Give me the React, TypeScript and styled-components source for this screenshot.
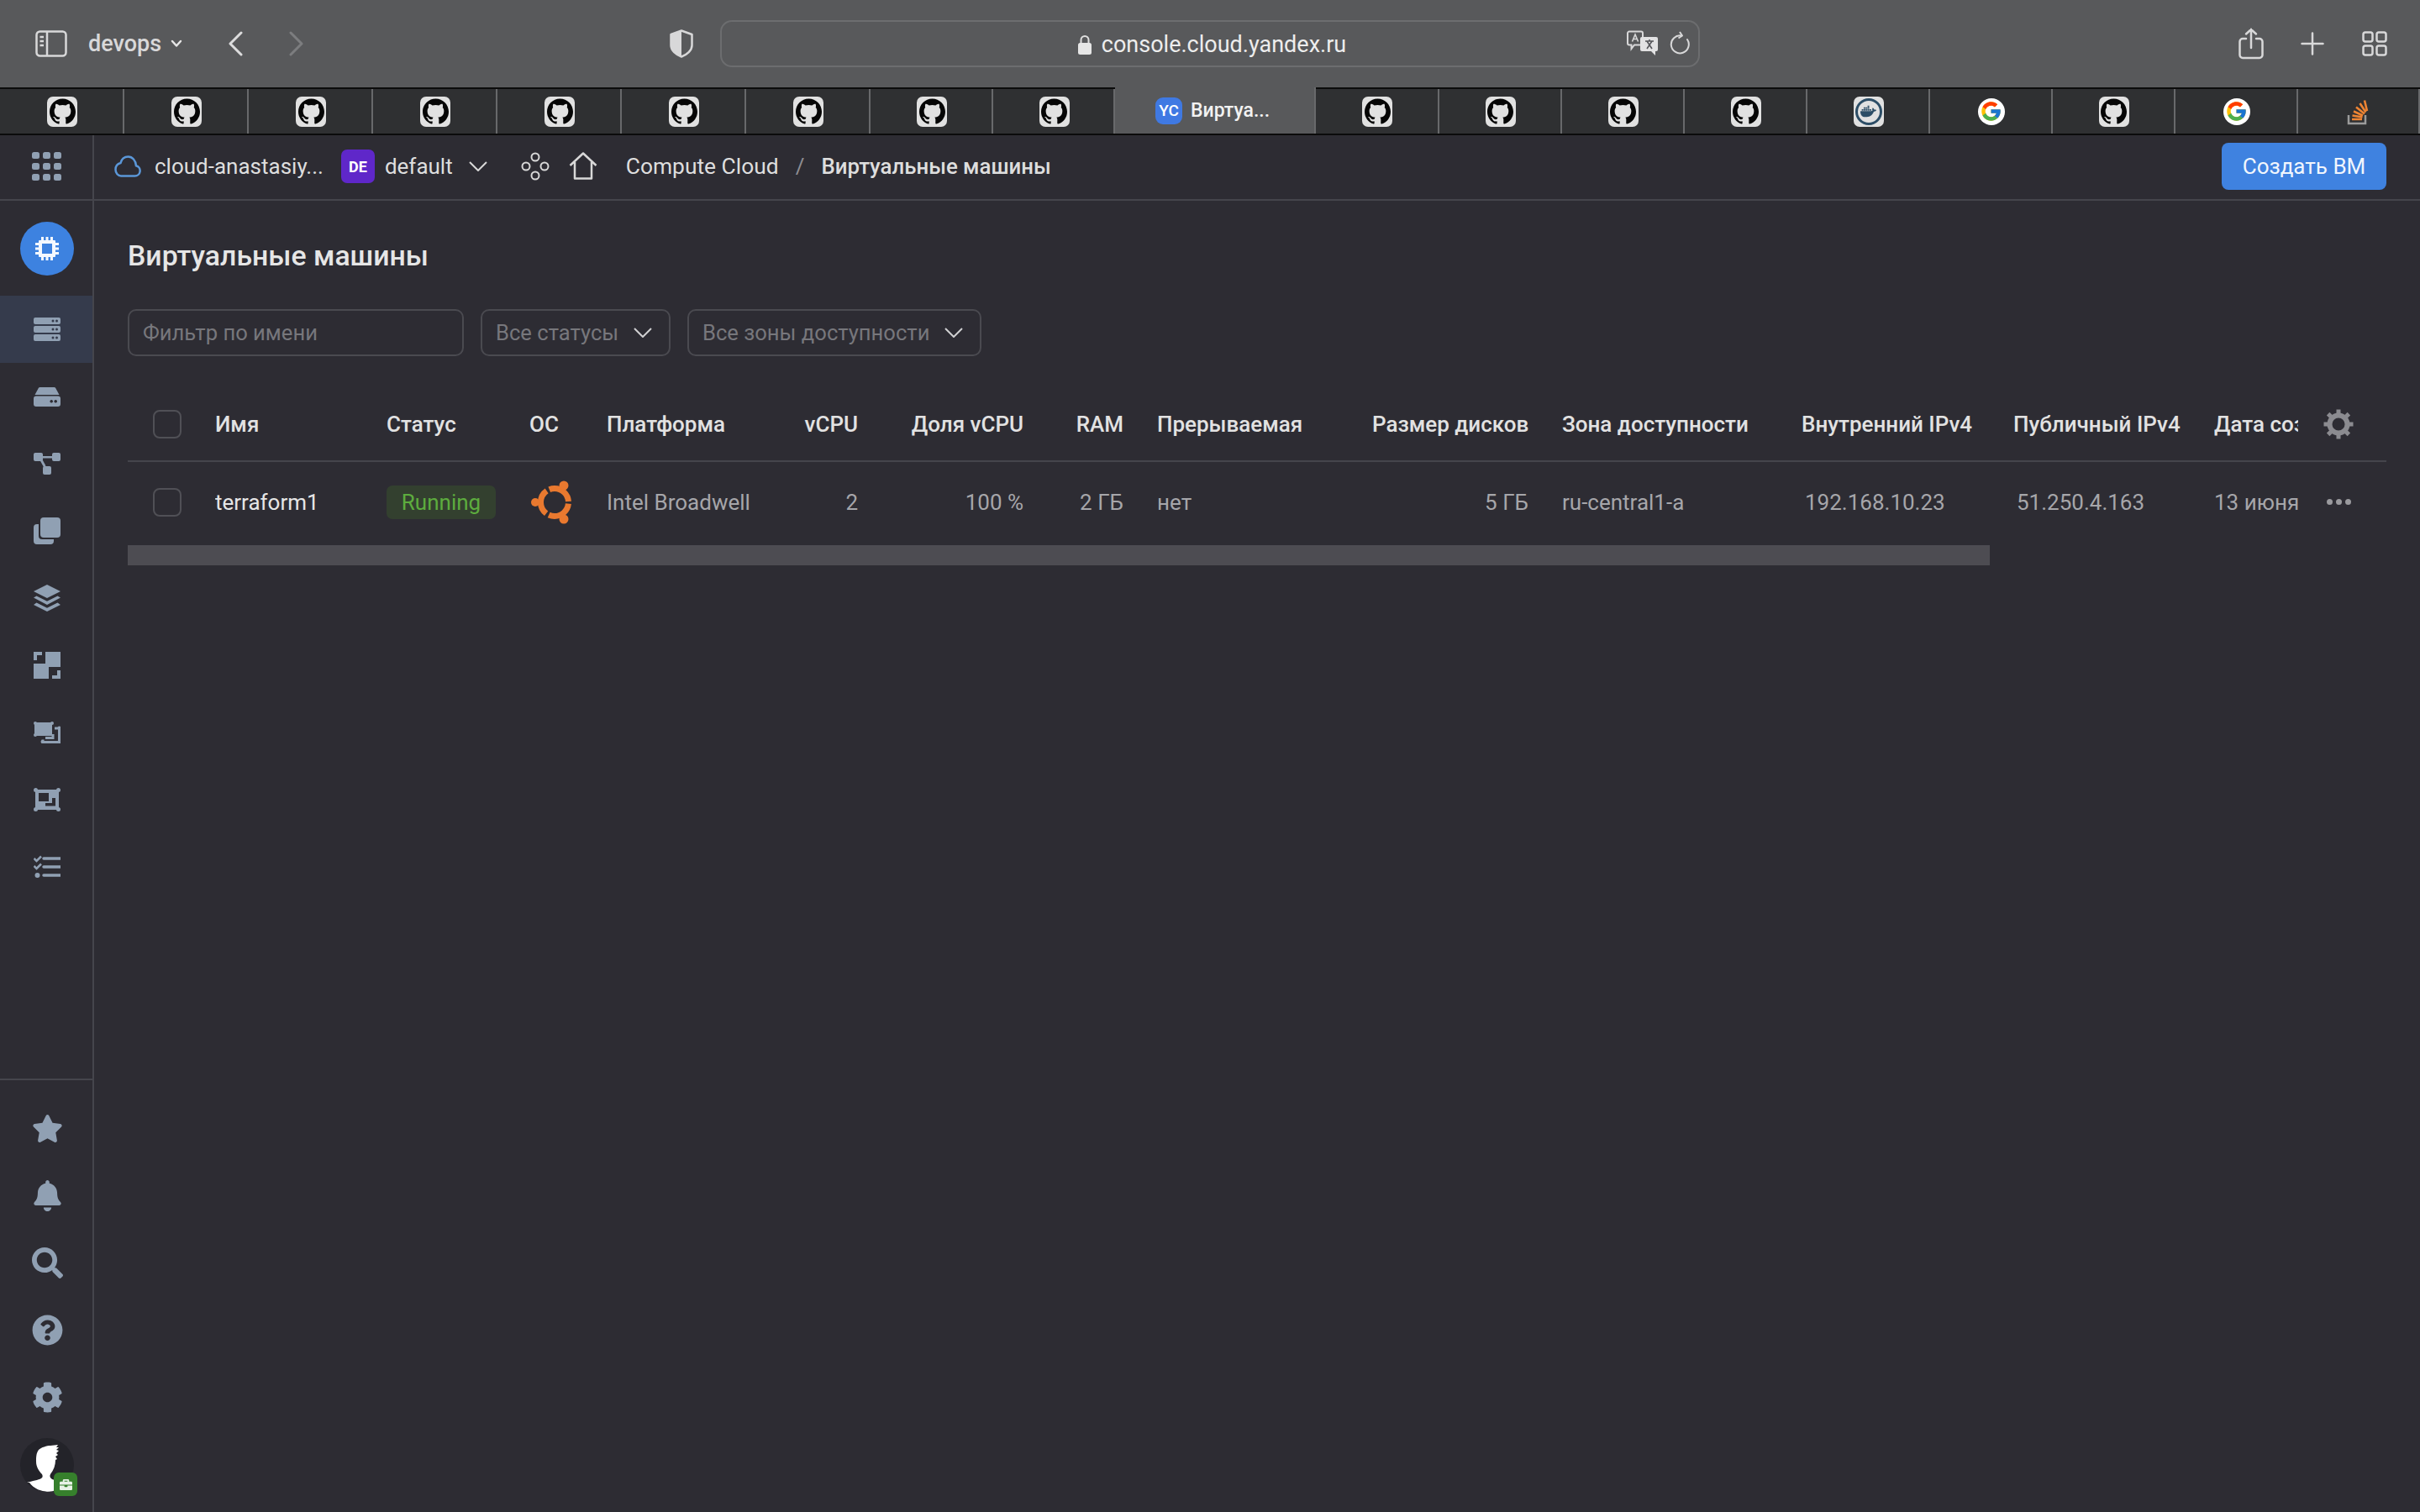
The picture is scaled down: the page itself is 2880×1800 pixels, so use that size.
import React from 'react'
import styled, { createGlobalStyle, css } from 'styled-components'
import { FaStar, FaBell, FaSearch, FaQuestionCircle, FaCog, FaBriefcase } from 'react-icons/fa'
import { FcGoogle } from 'react-icons/fc'
import { SiGithub, SiDocker } from 'react-icons/si'

const GlobalStyle = createGlobalStyle`
    html, body {
        margin: 0;
        padding: 0;
        background: #2d2c33;
    }
    * {
        box-sizing: border-box;
    }
`

const Page = styled.div`
    width: 2880px;
    height: 1800px;
    display: flex;
    flex-direction: column;
    overflow: hidden;
    font-family: Roboto, "Noto Sans", sans-serif;
    font-size: 26px;
    color: #dedede;
    background: #2d2c33;
`

/* browser chrome */
const Toolbar = styled.div`
    height: 104px;
    flex: none;
    display: grid;
    grid-template-columns: 857px 1166px 1fr;
    align-items: center;
    background: #58595b;
    color: #d8d8d9;
`

const ToolGroup = styled.div`
    height: 100%;
    display: flex;
    align-items: center;
`

const ToolIcon = styled.svg<{ $ml: number }>`
    flex: none;
    margin-left: ${p => p.$ml}px;
`

const GroupName = styled.span`
    margin-left: 25px;
    font-weight: 500;
    font-size: 27px;
    color: #d8d8d9;
`

const AddressBar = styled.div`
    height: 56px;
    display: flex;
    align-items: center;
    justify-content: center;
    position: relative;
    padding: 2px 0 0 5px;
    border: 2px solid #6c6d6f;
    border-radius: 14px;
`

const Url = styled.span`
    margin-left: 12px;
    font-size: 27px;
    color: #ededed;
`

const AddressActions = styled.div`
    position: absolute;
    right: 10px;
    top: 10px;
    display: flex;
    align-items: center;
    gap: 13px;
`

const TabBar = styled.div`
    height: 57px;
    flex: none;
    display: flex;
    background: #2f3032;
    border-top: 2px solid #0b0b0b;
    border-bottom: 2px solid #0b0b0b;
`

const Tab = styled.div<{ $wide?: boolean; $w: number }>`
    width: ${p => p.$w}px;
    flex: none;
    display: flex;
    align-items: center;
    justify-content: center;
    padding-left: 2px;
    border-right: 2px solid #68696b;
    ${p => p.$wide && css`
        background: #58595b;
        margin-top: -2px;
        justify-content: flex-start;
        padding-left: 48px;
        gap: 10px;
    `}
`

const TabTitle = styled.span`
    font-size: 23px;
    font-weight: 500;
    color: #f2f2f2;
`

const FavSquare = styled.div`
    width: 36px;
    height: 36px;
    display: flex;
    align-items: center;
    justify-content: center;
    border-radius: 7px;
    background: #e1e1e1;
    color: #060606;
`

const FavCircle = styled.div`
    width: 32px;
    height: 32px;
    display: flex;
    align-items: center;
    justify-content: center;
    border-radius: 50%;
    background: #fff;
`

const DockerRing = styled.div`
    width: 32px;
    height: 32px;
    display: flex;
    align-items: center;
    justify-content: center;
    border-radius: 50%;
    border: 3px solid #2c4d66;
    color: #2c4d66;
`

const YcFav = styled.div`
    width: 32px;
    height: 32px;
    display: flex;
    align-items: center;
    justify-content: center;
    border-radius: 9px;
    background: #3f79e3;
    color: #fff;
    font-size: 19px;
    font-weight: 500;
`

/* console */
const Body = styled.div`
    flex: 1;
    display: flex;
    min-height: 0;
`

const Sidebar = styled.aside`
    width: 112px;
    flex: none;
    display: flex;
    flex-direction: column;
    border-right: 2px solid #45454c;
`

const AppsCell = styled.div`
    height: 78px;
    flex: none;
    display: flex;
    align-items: center;
    justify-content: center;
    padding: 0 0 2px 2px;
    border-bottom: 2px solid #45454c;
`

const LogoCell = styled.div`
    height: 113px;
    flex: none;
    display: flex;
    align-items: center;
    justify-content: center;
    padding-left: 2px;
`

const LogoCircle = styled.div`
    width: 64px;
    height: 64px;
    display: flex;
    align-items: center;
    justify-content: center;
    border-radius: 50%;
    background: #3d82e0;
`

const NavItem = styled.div<{ $active?: boolean }>`
    height: 80px;
    flex: none;
    display: flex;
    align-items: center;
    justify-content: center;
    padding-left: 2px;
    color: #90a0b3;
    background: ${p => (p.$active ? '#353b4c' : 'transparent')};
`

const SideBottom = styled.div`
    margin-top: auto;
    display: flex;
    flex-direction: column;
    padding: 17px 0 24px;
    border-top: 2px solid #45454c;
`

const BottomItem = styled(NavItem)`
    font-size: 37px;
`

const AvatarWrap = styled.div`
    width: 64px;
    height: 64px;
    margin: 9px 0 0 24px;
    position: relative;
`

const AvatarSvg = styled.svg`
    display: block;
    border-radius: 50%;
    background: #232329;
`

const AvatarBadge = styled.div`
    position: absolute;
    left: 40px;
    top: 41px;
    width: 28px;
    height: 28px;
    display: flex;
    align-items: center;
    justify-content: center;
    border-radius: 6px;
    background: #36802c;
    color: #e8f2e6;
    font-size: 15px;
`

const Main = styled.div`
    flex: 1;
    min-width: 0;
    display: flex;
    flex-direction: column;
`

const Header = styled.header`
    height: 78px;
    flex: none;
    display: flex;
    align-items: center;
    padding: 0 40px 2px 24px;
    border-bottom: 2px solid #45454c;
`

const Crumb = styled.span<{ $strong?: boolean }>`
    font-weight: ${p => (p.$strong ? 500 : 400)};
    font-size: ${p => (p.$strong ? '25.800px' : '26px')};
    color: #dedede;
    white-space: nowrap;
`

const CloudName = styled(Crumb)`
    margin-left: 16px;
`

const FolderBadge = styled.div`
    width: 40px;
    height: 40px;
    margin-left: 21px;
    display: flex;
    align-items: center;
    justify-content: center;
    border-radius: 7px;
    background: #5f27c9;
    color: #fff;
    font-size: 18px;
    font-weight: 700;
`

const FolderName = styled(Crumb)`
    margin-left: 12px;
`

const HeadIcon = styled.svg<{ $ml: number }>`
    flex: none;
    margin-left: ${p => p.$ml}px;
    color: #d8d8d8;
`

const ServiceLink = styled(Crumb)`
    margin-left: 34px;
    font-size: 26.400px;
`

const Slash = styled.span`
    margin: 0 20px;
    color: #8d8d92;
`

const CreateButton = styled.button`
    margin-left: auto;
    width: 196px;
    height: 56px;
    border: 0;
    border-radius: 8px;
    background: #3f82e0;
    color: #f1f6fd;
    font: inherit;
`

const Content = styled.main`
    flex: 1;
    padding: 46px 40px 0 40px;
`

const Title = styled.h1`
    margin: 0;
    font-size: 33.800px;
    line-height: 40px;
    font-weight: 500;
    color: #e6e6e6;
`

const Filters = styled.div`
    margin-top: 43px;
    display: flex;
    gap: 20px;
`

const FilterBox = styled.div<{ $w: number }>`
    width: ${p => p.$w}px;
    height: 56px;
    display: flex;
    align-items: center;
    justify-content: space-between;
    padding: 0 20px 0 16px;
    border: 2px solid #4a4a50;
    border-radius: 10px;
    font-size: 25.600px;
    color: #77777c;
`

const tableColumns = css`
    display: grid;
    grid-template-columns: 34px 164px 130px 52px 173px 86px 157px 79px 216px 186px 245px 212px 199px 100px 16px;
    column-gap: 40px;
    align-items: center;
    padding-left: 30px;
`

const TableHead = styled.div`
    ${tableColumns}
    height: 88px;
    margin-top: 38px;
    border-bottom: 2px solid #45454c;
    font-weight: 500;
    color: #e2e2e2;
`

const TableRow = styled.div`
    ${tableColumns}
    height: 99px;
    padding-bottom: 4px;
    color: #a6a6aa;
`

const Cell = styled.div<{ $right?: boolean }>`
    overflow: hidden;
    white-space: nowrap;
    text-align: ${p => (p.$right ? 'right' : 'left')};
`

const NameCell = styled(Cell)`
    color: #e6e6e6;
`

const IpCell = styled(Cell)`
    padding-left: 4px;
`

const Checkbox = styled.div`
    width: 34px;
    height: 34px;
    border: 2px solid #505056;
    border-radius: 8px;
`

const StatusPill = styled.div`
    width: 130px;
    height: 40px;
    display: flex;
    align-items: center;
    justify-content: center;
    border-radius: 7px;
    background: #33402f;
    color: #5dac3e;
`

const GearSvg = styled.svg`
    justify-self: center;
    color: #8b8b90;
`

const RowDots = styled.div`
    justify-self: center;
    display: flex;
    gap: 4px;
`

const RowDot = styled.i`
    width: 7px;
    height: 7px;
    flex: none;
    border-radius: 50%;
    background: #9a9a9e;
`

const ScrollTrack = styled.div`
    width: 2216px;
    height: 24px;
    background: #4d4c52;
`

const BackForward = ({ dir, ml, dim }: { dir: 'l' | 'r'; ml: number; dim?: boolean }) => (
    <ToolIcon $ml={ml} width="18" height="30" viewBox="0 0 18 30" fill="none" stroke={dim ? '#7c7d7f' : '#dcdcdd'} strokeWidth="3" strokeLinecap="round" strokeLinejoin="round">
        <path d={dir === 'l' ? 'M16 2 3 15l13 13' : 'M2 2l13 13L2 28'} />
    </ToolIcon>
)

const GithubFav = () => (
    <FavSquare><SiGithub size={31} /></FavSquare>
)

const GoogleFav = () => (
    <FavCircle><FcGoogle size={27} /></FavCircle>
)

const DockerFav = () => (
    <FavSquare><DockerRing><SiDocker size={19} /></DockerRing></FavSquare>
)

const StackFav = () => (
    <svg width="28" height="32" viewBox="0 0 28 32" fill="none">
        <path d="M2 20v10h20V20" stroke="#9b9b9b" strokeWidth="2.500" />
        <path d="M6 25h12M6.500 20.500l12 2M8 15.500l11 5M11 10.500l10 8M15.500 6l7 10.500M21 2.500l3 12.500" stroke="#ee8433" strokeWidth="2.600" />
    </svg>
)

const ChipIcon = () => (
    <svg width="28" height="28" viewBox="0 0 28 28" fill="#f4f8fe">
        <path fillRule="evenodd" d="M5 4h18a1 1 0 0 1 1 1v18a1 1 0 0 1-1 1H5a1 1 0 0 1-1-1V5a1 1 0 0 1 1-1Zm3 4v12h12V8H8Z" />
        <path d="M7 0h3v5H7zM12.500 0h3v5h-3zM18 0h3v5h-3zM7 23h3v5H7zM12.500 23h3v5h-3zM18 23h3v5h-3zM0 7h5v3H0zM0 12.500h5v3H0zM0 18h5v3H0zM23 7h5v3h-5zM23 12.500h5v3h-5zM23 18h5v3h-5z" />
    </svg>
)

const ServersIcon = () => (
    <svg width="32" height="28" viewBox="0 0 32 28">
        <rect y="0" width="32" height="8" rx="2" fill="currentColor" />
        <rect y="10" width="32" height="8" rx="2" fill="currentColor" />
        <rect y="20" width="32" height="8" rx="2" fill="currentColor" />
        {[4, 14, 24].map(y => (
            <g key={y} fill="#353b4c">
                <circle cx="23" cy={y} r="1.500" />
                <circle cx="27.500" cy={y} r="1.500" />
            </g>
        ))}
    </svg>
)

const DiskIcon = () => (
    <svg width="32" height="23" viewBox="0 0 32 23" fill="currentColor">
        <path d="M7.500 0h17a2 2 0 0 1 1.700 1L30.500 9h-29L5.800 1a2 2 0 0 1 1.700-1Z" />
        <path fillRule="evenodd" d="M3 10.500h26a3 3 0 0 1 3 3V20a3 3 0 0 1-3 3H3a3 3 0 0 1-3-3v-6.500a3 3 0 0 1 3-3Zm20 6.300a1.800 1.800 0 1 0 0 .01Zm5 0a1.800 1.800 0 1 0 0 .01Z" />
    </svg>
)

const NetworkIcon = () => (
    <svg width="32" height="26" viewBox="0 0 32 26" fill="currentColor">
        <rect x="0" y="0" width="11" height="10" rx="2" />
        <rect x="22" y="0" width="10" height="10" rx="2" />
        <rect x="11" y="16" width="10" height="10" rx="2" />
        <path d="M10 4h13v2.500H10zM7 8l2.500-1.500 5 9-2.500 1.500z" />
    </svg>
)

const CopiesIcon = () => (
    <svg width="32" height="32" viewBox="0 0 32 32" fill="currentColor">
        <rect x="8" y="0" width="24" height="24" rx="4" />
        <path d="M6 8v14a4 4 0 0 0 4 4h14v2a4 4 0 0 1-4 4H4a4 4 0 0 1-4-4V12a4 4 0 0 1 4-4h2Z" />
    </svg>
)

const LayersIcon = () => (
    <svg width="32" height="32" viewBox="0 0 32 32" fill="currentColor">
        <path d="M16 0l16 8-16 8L0 8z" />
        <path d="M3.500 13.500 16 19.800l12.500-6.300 3.500 2L16 24 0 15.500z" />
        <path d="M3.500 21.500 16 27.800l12.500-6.300 3.500 2.500L16 32 0 24z" />
    </svg>
)

const ImagesIcon = () => (
    <svg width="32" height="32" viewBox="0 0 32 32" fill="currentColor">
        <path d="M0 0h10v4H4v6H0zM14 0h18v18H14zM0 14h18v18H0zM28 22h4v10H22v-4h6z" />
    </svg>
)

const SnapshotIcon = () => (
    <svg width="32" height="26" viewBox="0 0 32 26" fill="currentColor">
        <rect x="1" y="1" width="21" height="16" />
        {[[2, 2], [22, 2], [2, 16]].map(([cx, cy]) => (
            <circle key={`${cx}-${cy}`} cx={cx} cy={cy} r="2" />
        ))}
        <path d="M25 8h5.500v16.500H11v-3" fill="none" stroke="currentColor" strokeWidth="3" />
        <path d="M14 19.500h9V15" fill="none" stroke="currentColor" strokeWidth="3" />
        {[[30.500, 7.500], [30.500, 24], [10.500, 24]].map(([cx, cy]) => (
            <circle key={`${cx}-${cy}`} cx={cx} cy={cy} r="2" />
        ))}
    </svg>
)

const GroupIcon = () => (
    <svg width="32" height="28" viewBox="0 0 32 28" fill="currentColor">
        <rect x="2" y="2" width="28" height="24" />
        {[[2.500, 2.500], [29.500, 2.500], [2.500, 25.500], [29.500, 25.500]].map(([cx, cy]) => (
            <circle key={`${cx}-${cy}`} cx={cx} cy={cy} r="2.500" />
        ))}
        <path d="M6 6h12v10H6zM22 12h4v9.500H14v-3.500h8z" fill="#2d2c33" />
    </svg>
)

const ChecklistIcon = () => (
    <svg width="32" height="28" viewBox="0 0 32 28" fill="none" stroke="currentColor" strokeWidth="3.500">
        <path d="M12 4h20M12 14h20M12 24h20" strokeLinecap="round" />
        <path d="M0.500 4l3 3L9 1.500M0.500 13l3 3L9 10.500" strokeWidth="2.500" />
        <circle cx="4.500" cy="24" r="3" fill="currentColor" stroke="none" />
    </svg>
)

const AvatarFigure = () => (
    <AvatarSvg width="64" height="64" viewBox="0 0 64 64" fill="#fff">
        <path d="M8 53c6-2 14-3 17-5 2-1 2-3 1-5-4-4-7-9-7-15 0-5 0-10 3-14 3-3 10-5 14-5l9-1-2 3 3 0-3 3 3 1-3 3 2 2-3 2 2 3-2 1c0 6-2 12-6 17-1 2-1 4 2 6l9 3v11c-3 .8-9 1-12 1-10 0-19-4-24-11Z" />
    </AvatarSvg>
)

const UbuntuLogo = () => (
    <svg width="54" height="52" viewBox="-2 0 54 52" fill="none">
        <circle cx="28" cy="26" r="16.500" stroke="#e9792f" strokeWidth="7" strokeDasharray="31 3.560" strokeDashoffset="-1.780" />
        <circle cx="39" cy="6" r="5.500" fill="#e9792f" />
        <circle cx="39" cy="46" r="5.500" fill="#e9792f" />
        <circle cx="5" cy="26" r="5" fill="#e9792f" />
    </svg>
)

const ColumnGear = () => (
    <GearSvg width="36" height="36" viewBox="0 0 36 36" fill="none">
        <circle cx="18" cy="18" r="10.500" stroke="currentColor" strokeWidth="6" />
        {[0, 45, 90, 135, 180, 225, 270, 315].map(a => (
            <rect key={a} x="15.500" y="0.500" width="5" height="7" fill="currentColor" transform={`rotate(${a} 18 18)`} />
        ))}
    </GearSvg>
)

const tabs: { w: number; node: React.ReactNode }[] = [
    ...Array.from({ length: 7 }, () => ({ w: 148, node: <GithubFav /> })),
    { w: 146, node: <GithubFav /> },
    { w: 145, node: <GithubFav /> },
    { w: 239, node: <><YcFav>YC</YcFav><TabTitle>Виртуа...</TabTitle></> },
    { w: 146.5, node: <GithubFav /> },
    { w: 146, node: <GithubFav /> },
    { w: 146, node: <GithubFav /> },
    { w: 146, node: <GithubFav /> },
    { w: 146, node: <DockerFav /> },
    { w: 146, node: <GoogleFav /> },
    { w: 146, node: <GithubFav /> },
    { w: 146, node: <GoogleFav /> },
    { w: 145.5, node: <StackFav /> },
]

const navIcons = [ServersIcon, DiskIcon, NetworkIcon, CopiesIcon, LayersIcon, ImagesIcon, SnapshotIcon, GroupIcon, ChecklistIcon]

const App: React.FC = () => {
    return (
        <Page>
            <GlobalStyle />
            <Toolbar>
                <ToolGroup>
                    <ToolIcon $ml={42} width="38" height="32" viewBox="0 0 38 32" fill="none" stroke="#d8d8d9" strokeWidth="2.500">
                        <rect x="1.500" y="1.500" width="35" height="29" rx="4" />
                        <path d="M14 2v28M5.500 8H10M5.500 13H10M5.500 18H10" />
                    </ToolIcon>
                    <GroupName>devops</GroupName>
                    <ToolIcon $ml={11} width="14" height="10" viewBox="0 0 14 10" fill="none" stroke="#e6e6e6" strokeWidth="2.500" strokeLinecap="round" strokeLinejoin="round">
                        <path d="M2 2l5 5.500L12 2" />
                    </ToolIcon>
                    <BackForward dir="l" ml={54} />
                    <BackForward dir="r" ml={55} dim />
                    <ToolIcon $ml={435} width="28" height="34" viewBox="0 0 28 34" fill="none">
                        <path d="M14 1.500 26.500 6v13c0 6-6 11-12.500 13.500C7.500 30 1.500 25 1.500 19V6Z" stroke="#d8d8d9" strokeWidth="2.500" strokeLinejoin="round" />
                        <path d="M14 1.500V32.500C7.500 30 1.500 25 1.500 19V6Z" fill="#d8d8d9" />
                    </ToolIcon>
                </ToolGroup>
                <AddressBar>
                    <svg width="16" height="24" viewBox="0 0 16 24" fill="none">
                        <path d="M3.500 11V6.500a4.500 4.500 0 0 1 9 0V11" stroke="#dedede" strokeWidth="2" />
                        <rect y="10" width="16" height="14" rx="2.500" fill="#e6e6e6" />
                    </svg>
                    <Url>console.cloud.yandex.ru</Url>
                    <AddressActions>
                        <svg width="38" height="30" viewBox="0 0 38 30" fill="none">
                            <path d="M3 1.500h14a2 2 0 0 1 2 2v12a2 2 0 0 1-2 2H9L5.500 22v-4.500H3a2 2 0 0 1-2-2v-12a2 2 0 0 1 2-2Z" stroke="#d8d8d9" strokeWidth="2" />
                            <path d="M6.500 13.500 10 5l3.500 8.500M8 10.500h4" stroke="#d8d8d9" strokeWidth="1.600" />
                            <path d="M18 8h17a2 2 0 0 1 2 2v13a2 2 0 0 1-2 2h-1v5l-5-5H18a2 2 0 0 1-2-2V10a2 2 0 0 1 2-2Z" fill="#e2e2e3" />
                            <path d="M22 13h10M27 11v2M24 22l6-9M24 13l6 9" stroke="#55565a" strokeWidth="1.600" />
                        </svg>
                        <svg width="24" height="28" viewBox="0 0 24 28" fill="none" stroke="#d8d8d9" strokeWidth="2">
                            <path d="M14 5.500A10.500 10.500 0 1 0 21 10" strokeLinecap="round" />
                            <path d="M12 1l3 4.500-4.500 3" strokeLinejoin="round" />
                        </svg>
                    </AddressActions>
                </AddressBar>
                <ToolGroup>
                    <ToolIcon $ml={641} width="30" height="38" viewBox="0 0 30 38" fill="none" stroke="#d8d8d9" strokeWidth="2.500" strokeLinecap="round">
                        <path d="M9 13H5a3.500 3.500 0 0 0-3.500 3.500v16A3.500 3.500 0 0 0 5 36h20a3.500 3.500 0 0 0 3.500-3.500v-16A3.500 3.500 0 0 0 25 13h-4M15 24V2M9 7.500 15 2l6 5.500" />
                    </ToolIcon>
                    <ToolIcon $ml={44} width="28" height="28" viewBox="0 0 28 28" fill="none" stroke="#d8d8d9" strokeWidth="2.500" strokeLinecap="round">
                        <path d="M14 1.500v25M1.500 14h25" />
                    </ToolIcon>
                    <ToolIcon $ml={45} width="30" height="30" viewBox="0 0 30 30" fill="none" stroke="#d8d8d9" strokeWidth="2.500">
                        <rect x="1.500" y="1.500" width="11" height="11" rx="2.500" />
                        <rect x="17.500" y="1.500" width="11" height="11" rx="2.500" />
                        <rect x="1.500" y="17.500" width="11" height="11" rx="2.500" />
                        <rect x="17.500" y="17.500" width="11" height="11" rx="2.500" />
                    </ToolIcon>
                </ToolGroup>
            </Toolbar>

            <TabBar>
                {tabs.map((t, i) => (
                    <Tab key={i} $w={t.w} $wide={i === 9}>{t.node}</Tab>
                ))}
            </TabBar>

            <Body>
                <Sidebar>
                    <AppsCell>
                        <svg width="36" height="34" viewBox="0 0 36 34" fill="#90a0b3">
                            {[0, 13, 26].map(y => [0, 13, 26].map(x => (
                                <rect key={`${x}-${y}`} x={x} y={y} width="9" height="8" rx="2.500" />
                            )))}
                        </svg>
                    </AppsCell>
                    <LogoCell>
                        <LogoCircle><ChipIcon /></LogoCircle>
                    </LogoCell>
                    {navIcons.map((Icon, i) => (
                        <NavItem key={i} $active={i === 0}><Icon /></NavItem>
                    ))}
                    <SideBottom>
                        <BottomItem><FaStar /></BottomItem>
                        <BottomItem><FaBell /></BottomItem>
                        <BottomItem><FaSearch /></BottomItem>
                        <BottomItem><FaQuestionCircle /></BottomItem>
                        <BottomItem><FaCog /></BottomItem>
                        <AvatarWrap>
                            <AvatarFigure />
                            <AvatarBadge><FaBriefcase /></AvatarBadge>
                        </AvatarWrap>
                    </SideBottom>
                </Sidebar>

                <Main>
                    <Header>
                        <svg width="32" height="26" viewBox="0 0 32 26" fill="none" stroke="#5b97d8" strokeWidth="2.500">
                            <path d="M8 24.500h16.500a6.200 6.200 0 0 0 1.500-12.200C25.500 6 21.500 1.500 16.500 1.500c-4.500 0-8 3-9 7.500C3.500 10 1.500 13.500 1.500 17c0 4 3 7.500 6.500 7.500Z" />
                        </svg>
                        <CloudName>cloud-anastasiy...</CloudName>
                        <FolderBadge>DE</FolderBadge>
                        <FolderName>default</FolderName>
                        <HeadIcon $ml={19} width="22" height="12" viewBox="0 0 22 12" fill="none" stroke="currentColor" strokeWidth="2">
                            <path d="M1 1l10 10L21 1" />
                        </HeadIcon>
                        <HeadIcon $ml={40} width="34" height="34" viewBox="0 0 34 34" fill="none" stroke="currentColor" strokeWidth="2">
                            <circle cx="17" cy="6" r="4.500" />
                            <circle cx="6" cy="17" r="4.500" />
                            <circle cx="28" cy="17" r="4.500" />
                            <circle cx="17" cy="28" r="4.500" />
                        </HeadIcon>
                        <HeadIcon $ml={23} width="34" height="34" viewBox="0 0 34 34" fill="none" stroke="currentColor" strokeWidth="2.500" strokeLinejoin="round">
                            <path d="M1.500 16 17 1.500 32.500 16M7 12v19.500h20V12" />
                        </HeadIcon>
                        <ServiceLink>Compute Cloud</ServiceLink>
                        <Slash>/</Slash>
                        <Crumb $strong>Виртуальные машины</Crumb>
                        <CreateButton>Создать ВМ</CreateButton>
                    </Header>

                    <Content>
                        <Title>Виртуальные машины</Title>
                        <Filters>
                            <FilterBox $w={400}>Фильтр по имени</FilterBox>
                            <FilterBox $w={226}>
                                Все статусы
                                <svg width="22" height="12" viewBox="0 0 22 12" fill="none" stroke="#d0d0d2" strokeWidth="2"><path d="M1 1l10 10L21 1" /></svg>
                            </FilterBox>
                            <FilterBox $w={350}>
                                Все зоны доступности
                                <svg width="22" height="12" viewBox="0 0 22 12" fill="none" stroke="#d0d0d2" strokeWidth="2"><path d="M1 1l10 10L21 1" /></svg>
                            </FilterBox>
                        </Filters>

                        <TableHead>
                            <Checkbox />
                            <Cell>Имя</Cell>
                            <Cell>Статус</Cell>
                            <Cell>ОС</Cell>
                            <Cell>Платформа</Cell>
                            <Cell $right>vCPU</Cell>
                            <Cell $right>Доля vCPU</Cell>
                            <Cell $right>RAM</Cell>
                            <Cell>Прерываемая</Cell>
                            <Cell $right>Размер дисков</Cell>
                            <Cell>Зона доступности</Cell>
                            <Cell>Внутренний IPv4</Cell>
                            <Cell>Публичный IPv4</Cell>
                            <Cell>Дата создания</Cell>
                            <ColumnGear />
                        </TableHead>
                        <TableRow>
                            <Checkbox />
                            <NameCell>terraform1</NameCell>
                            <StatusPill>Running</StatusPill>
                            <UbuntuLogo />
                            <Cell>Intel Broadwell</Cell>
                            <Cell $right>2</Cell>
                            <Cell $right>100 %</Cell>
                            <Cell $right>2 ГБ</Cell>
                            <Cell>нет</Cell>
                            <Cell $right>5 ГБ</Cell>
                            <Cell>ru-central1-a</Cell>
                            <IpCell>192.168.10.23</IpCell>
                            <IpCell>51.250.4.163</IpCell>
                            <Cell>13 июня</Cell>
                            <RowDots><RowDot /><RowDot /><RowDot /></RowDots>
                        </TableRow>
                        <ScrollTrack />
                    </Content>
                </Main>
            </Body>
        </Page>
    )
}

export default App
